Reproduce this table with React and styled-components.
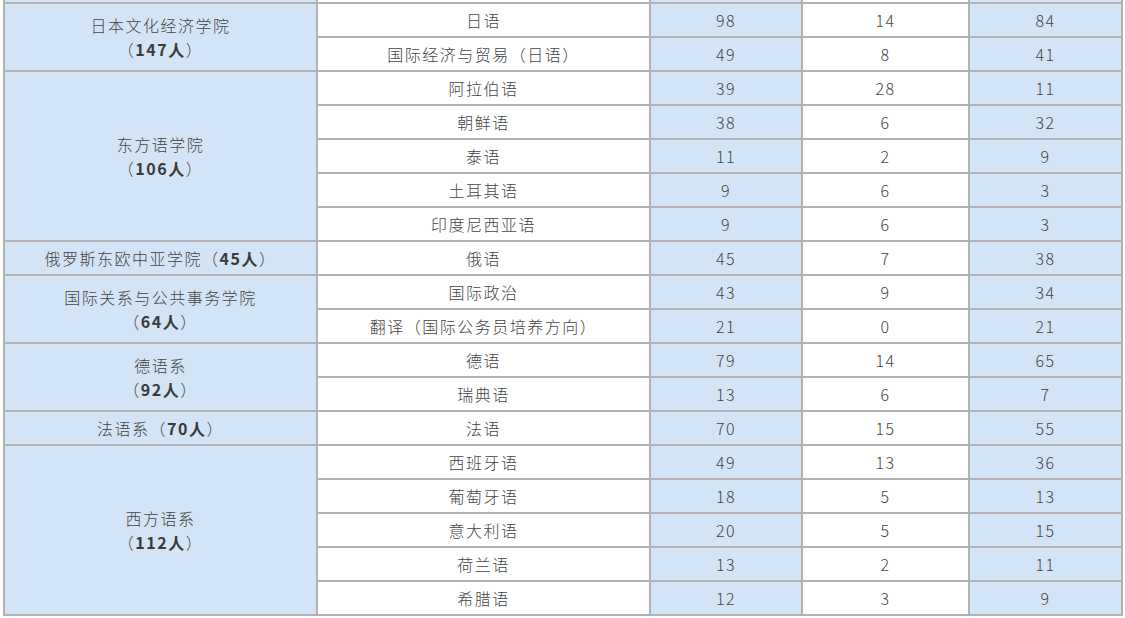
import React from "react";
import styled, { createGlobalStyle } from "styled-components";

const Global = createGlobalStyle`
  html, body { margin: 0; padding: 0; background: #ffffff; }
  body { font-family: "Noto Sans CJK SC", "Noto Sans", sans-serif; }
`;

const Viewport = styled.div`
  width: 1125px;
  height: 618px;
  overflow: hidden;
  padding: 0 0 0 3px;
  box-sizing: border-box;
`;

const Table = styled.table`
  border-collapse: collapse;
  table-layout: fixed;
  width: 1118px;
  margin-top: -32px;
  color: #444444;
  font-size: 16px;
  font-weight: 300;
  letter-spacing: 1.5px;
`;

const Row = styled.tr`
  height: 34px;
`;

const Cell = styled.td`
  border: 2px solid #b1b1b1;
  padding: 0;
  text-align: center;
  vertical-align: middle;
  line-height: 24px;
  background: ${(p) => (p.$blue ? "#d3e4f6" : "#ffffff")};
  white-space: nowrap;
`;

const Bold = styled.b`
  font-weight: 700;
  color: #3a3a3a;
`;

const data = [
  {
    name: "日本文化经济学院",
    count: "147人",
    split: true,
    majors: [
      ["日语", 98, 14, 84],
      ["国际经济与贸易（日语）", 49, 8, 41],
    ],
  },
  {
    name: "东方语学院",
    count: "106人",
    split: true,
    majors: [
      ["阿拉伯语", 39, 28, 11],
      ["朝鲜语", 38, 6, 32],
      ["泰语", 11, 2, 9],
      ["土耳其语", 9, 6, 3],
      ["印度尼西亚语", 9, 6, 3],
    ],
  },
  {
    name: "俄罗斯东欧中亚学院",
    count: "45人",
    split: false,
    majors: [["俄语", 45, 7, 38]],
  },
  {
    name: "国际关系与公共事务学院",
    count: "64人",
    split: true,
    majors: [
      ["国际政治", 43, 9, 34],
      ["翻译（国际公务员培养方向）", 21, 0, 21],
    ],
  },
  {
    name: "德语系",
    count: "92人",
    split: true,
    majors: [
      ["德语", 79, 14, 65],
      ["瑞典语", 13, 6, 7],
    ],
  },
  {
    name: "法语系",
    count: "70人",
    split: false,
    majors: [["法语", 70, 15, 55]],
  },
  {
    name: "西方语系",
    count: "112人",
    split: true,
    majors: [
      ["西班牙语", 49, 13, 36],
      ["葡萄牙语", 18, 5, 13],
      ["意大利语", 20, 5, 15],
      ["荷兰语", 13, 2, 11],
      ["希腊语", 12, 3, 9],
    ],
  },
];

function CollegeLabel({ name, count, split }) {
  if (split) {
    return (
      <>
        {name}
        <br />（<Bold>{count}</Bold>）
      </>
    );
  }
  return (
    <>
      {name}（<Bold>{count}</Bold>）
    </>
  );
}

export default function App() {
  return (
    <>
      <Global />
      <Viewport>
        <Table>
          <colgroup>
            <col style={{ width: 313 }} />
            <col style={{ width: 333 }} />
            <col style={{ width: 152 }} />
            <col style={{ width: 167 }} />
            <col style={{ width: 153 }} />
          </colgroup>
          <tbody>
            <Row>
              <Cell $blue />
              <Cell />
              <Cell $blue />
              <Cell />
              <Cell $blue />
            </Row>
            {data.map((college) =>
              college.majors.map((m, i) => (
                <Row key={college.name + m[0]}>
                  {i === 0 && (
                    <Cell $blue rowSpan={college.majors.length}>
                      <CollegeLabel {...college} />
                    </Cell>
                  )}
                  <Cell>{m[0]}</Cell>
                  <Cell $blue>{m[1]}</Cell>
                  <Cell>{m[2]}</Cell>
                  <Cell $blue>{m[3]}</Cell>
                </Row>
              ))
            )}
          </tbody>
        </Table>
      </Viewport>
    </>
  );
}
